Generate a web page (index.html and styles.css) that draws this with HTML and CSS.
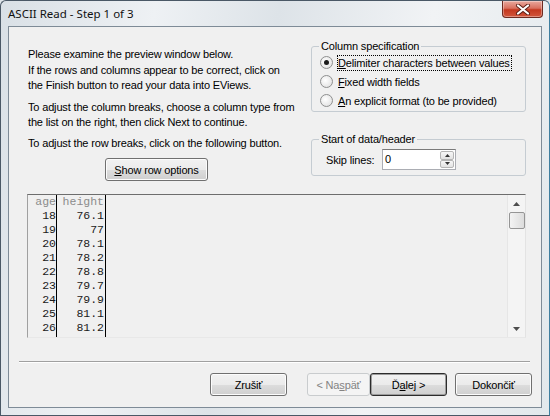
FILE: index.html
```html
<!DOCTYPE html>
<html lang="sk">
<head>
    <meta charset="UTF-8">
    <meta name="viewport" content="width=device-width, initial-scale=1.0">
    <title>ASCII Read - Step 1 of 3</title>
    <link rel="stylesheet" href="styles.css">
</head>
<body>
    <div class="window">
        <div class="titlebar">
            <span class="title">ASCII Read - Step 1 of 3</span>
            <div class="close-btn">
                <svg width="16" height="11" viewBox="0 0 16 11">
                    <path d="M3 1.5 L13 9.5 M13 1.5 L3 9.5" stroke="#5a1d14" stroke-width="4" stroke-linecap="round"/>
                    <path d="M3 1.5 L13 9.5 M13 1.5 L3 9.5" stroke="#ffffff" stroke-width="2.2" stroke-linecap="round"/>
                </svg>
            </div>
        </div>

        <div class="client">
            <div class="main">
                <div class="top">
                    <div class="intro">
                        <p>Please examine the preview window below.</p>
                        <p class="p2">If the rows and columns appear to be correct, click on<br>the Finish button to read your data into EViews.</p>
                        <p class="p3">To adjust the column breaks, choose a column type from<br>the list on the right, then click Next to continue.</p>
                        <p class="p4">To adjust the row breaks, click on the following button.</p>
                        <button class="btn show-rows"><u>S</u>how row options</button>
                    </div>

                    <div class="side">
                        <fieldset class="group colspec">
                            <legend>Column specification</legend>
                            <div class="radio-row"><span class="radio checked"></span><span class="focus"><u>D</u>elimiter characters between values</span></div>
                            <div class="radio-row"><span class="radio"></span><span><u>F</u>ixed width fields</span></div>
                            <div class="radio-row"><span class="radio"></span><span><u>A</u>n explicit format (to be provided)</span></div>
                        </fieldset>

                        <fieldset class="group startdata">
                            <legend>Start of data/header</legend>
                            <div class="skip-row">
                                <span class="skip-label">Skip lines:</span>
                                <div class="spin">
                                    <span class="spin-val">0</span>
                                    <div class="spin-btns">
                                        <span class="spin-btn"><svg width="5" height="3" viewBox="0 0 5 3"><path d="M0 3 L2.5 0 L5 3 Z" fill="#333"/></svg></span>
                                        <span class="spin-btn"><svg width="5" height="3" viewBox="0 0 5 3"><path d="M0 0 L5 0 L2.5 3 Z" fill="#333"/></svg></span>
                                    </div>
                                </div>
                            </div>
                        </fieldset>
                    </div>
                </div>

                <div class="preview">
                    <div class="grid">
                        <div class="col col-age">
                            <div class="head">age</div>
                            <div>18</div><div>19</div><div>20</div><div>21</div><div>22</div>
                            <div>23</div><div>24</div><div>25</div><div>26</div>
                        </div>
                        <div class="col col-height">
                            <div class="head">height</div>
                            <div>76.1</div><div>77</div><div>78.1</div><div>78.2</div><div>78.8</div>
                            <div>79.7</div><div>79.9</div><div>81.1</div><div>81.2</div>
                        </div>
                    </div>
                    <div class="vscroll">
                        <div class="arrow"><svg width="7" height="4" viewBox="0 0 7 4"><path d="M0 4 L3.5 0 L7 4 Z" fill="#4d4d4d"/></svg></div>
                        <div class="thumb"></div>
                        <div class="track"></div>
                        <div class="arrow"><svg width="7" height="4" viewBox="0 0 7 4"><path d="M0 0 L7 0 L3.5 4 Z" fill="#4d4d4d"/></svg></div>
                    </div>
                </div>
            </div>

            <div class="footer">
                <div class="separator"></div>
                <div class="buttons">
                    <button class="btn">Zrušiť</button>
                    <button class="btn disabled back">&lt; Na<u>s</u>päť</button>
                    <button class="btn default">Ď<u>a</u>lej &gt;</button>
                    <button class="btn finish">Dokončiť</button>
                </div>
            </div>
        </div>
    </div>
</body>
</html>
```

FILE: styles.css
```css
body {
    margin: 0;
    font-family: "Liberation Sans", Arial, sans-serif;
    font-size: 11px;
    letter-spacing: -0.16px;
    color: #000;
    background: #dfe5ea;
}

.window {
    width: 550px;
    height: 416px;
    box-sizing: border-box;
    padding: 0 7px 7px 7px;
    border: 1px solid #4a5866;
    border-right-color: #3f7fa0;
    border-radius: 6px 6px 0 0;
    background: linear-gradient(100deg, #d9e0e6 0%, #eef1f4 25%, #dde3e8 45%, #f1f3f5 70%, #e2e8ec 100%);
    display: flex;
    flex-direction: column;
}

/* barra de titulo */
.titlebar {
    height: 25px;
    display: flex;
    align-items: flex-start;
    justify-content: space-between;
}
.title {
    font-family: "Noto Sans", sans-serif;
    font-size: 11.5px;
    letter-spacing: 0;
    margin-top: 5px;
    color: #111;
}
.close-btn {
    width: 41px;
    height: 17px;
    box-sizing: border-box;
    margin-right: -1px;
    border: 1px solid #6e2a20;
    border-top: none;
    border-radius: 0 0 4px 4px;
    background: linear-gradient(#e9a99e 0%, #d9705f 45%, #c4381f 55%, #d2553b 100%);
    box-shadow: inset 0 0 0 1px rgba(255,255,255,0.35);
    display: flex;
    align-items: center;
    justify-content: center;
}

.client {
    flex: 1;
    border: 1px solid #7e8b97;
    background: #f0f0f0;
    display: flex;
    flex-direction: column;
}

.main {
    padding: 13px 15px 0 18px;
}

.top {
    display: flex;
    justify-content: space-between;
    align-items: flex-start;
}

.intro {
    padding-left: 1px;
    margin-top: 7px;
}
.intro p {
    margin: 0;
    line-height: 15px;
    white-space: nowrap;
}
.intro .p2 { margin-top: 1px; }
.intro .p3 { margin-top: 7px; }
.intro .p4 { margin-top: 6px; }

.btn {
    height: 23px;
    width: 77px;
    padding: 0;
    font-family: "Liberation Sans", Arial, sans-serif;
    font-size: 11px;
    letter-spacing: -0.16px;
    color: #000;
    border: 1px solid #707070;
    border-radius: 3px;
    background: linear-gradient(#f2f2f2 0%, #ebebeb 50%, #dddddd 51%, #cfcfcf 100%);
    box-shadow: inset 0 0 0 1px #fcfcfc;
}
.show-rows {
    width: 103px;
    margin-top: 7px;
    margin-left: 77px;
}

.side {
    width: 215px;
}

.group {
    margin: 0;
    padding: 0 7px 1px 7px;
    border: 1px solid #c5ccd2;
    border-radius: 3px;
}
.group legend {
    padding: 0 2px;
    line-height: 13px;
}

.radio-row {
    height: 19px;
    display: flex;
    align-items: center;
    padding-left: 1px;
}
.radio {
    width: 11px;
    height: 11px;
    border: 1px solid #8e8f8f;
    border-radius: 50%;
    background: radial-gradient(circle at 40% 40%, #ffffff 0%, #e6e6e6 70%, #d0d0d0 100%);
    margin-right: 5px;
    position: relative;
}
.radio.checked::after {
    content: "";
    position: absolute;
    left: 3px;
    top: 3px;
    width: 5px;
    height: 5px;
    border-radius: 50%;
    background: #1a1a1a;
}
.focus {
    outline: 1px dotted #000;
    padding: 1px 1px 1px 0;
}

.startdata {
    margin-top: 21px;
    padding-bottom: 5px;
}
.skip-row {
    display: flex;
    align-items: center;
    padding-left: 7px;
    margin-top: 3px;
}
.skip-label {
    width: 56px;
}
.spin {
    width: 74px;
    height: 21px;
    box-sizing: border-box;
    border: 1px solid #abadb3;
    border-top-color: #7a7a7a;
    background: #fff;
    display: flex;
    justify-content: space-between;
    align-items: stretch;
}
.spin-val {
    padding: 3px 0 0 2px;
}
.spin-btns {
    width: 14px;
    display: flex;
    flex-direction: column;
    padding: 1px 1px 1px 0;
}
.spin-btn {
    flex: 1;
    border: 1px solid #b5b5b5;
    border-radius: 2px;
    background: linear-gradient(#f7f7f7, #e2e2e2);
    display: flex;
    align-items: center;
    justify-content: center;
}

/* ventana de vista previa */
.preview {
    margin-top: 13px;
    height: 144px;
    box-sizing: border-box;
    border: 1px solid;
    border-color: #6d6d6d #e3e3e3 #e8e8e8 #a0a0a0;
    display: flex;
}
.grid {
    flex: 1;
    display: flex;
    font-family: "Liberation Mono", "Courier New", monospace;
    font-size: 11.5px;
    letter-spacing: 0;
    color: #1a1a1a;
}
.col {
    border-right: 1px solid #000;
    text-align: right;
    line-height: 14px;
}
.col .head { color: #8c8c8c; }
.col-age { width: 28px; }
.col-height { width: 47px; padding-right: 1px; }

.vscroll {
    width: 17px;
    display: flex;
    flex-direction: column;
    background: #f4f4f4;
    border-left: 1px solid #e6e6e6;
}
.vscroll .arrow {
    height: 17px;
    display: flex;
    align-items: center;
    justify-content: center;
}
.vscroll .thumb {
    height: 15px;
    margin: 0 0 0 1px;
    border: 1px solid #959595;
    border-radius: 2px;
    background: linear-gradient(90deg, #f3f3f3, #dcdcdc);
}
.vscroll .track { flex: 1; }

.footer {
    padding: 23px 9px 0 10px;
}
.separator {
    margin-right: 2px;
    border-top: 1px solid #a0a0a0;
    border-bottom: 1px solid #ffffff;
}
.buttons {
    margin-top: 10px;
    display: flex;
    justify-content: flex-end;
}
.back {
    width: 63px;
    margin-left: 20px;
}
.finish { margin-left: 8px; }
.btn.disabled {
    color: #838383;
    border-color: #c9ccce;
    background: #f4f4f4;
    box-shadow: none;
}
.btn.default {
    border-color: #2c2c2c;
    box-shadow: inset 0 0 0 1px #9c9c9c;
}
```
